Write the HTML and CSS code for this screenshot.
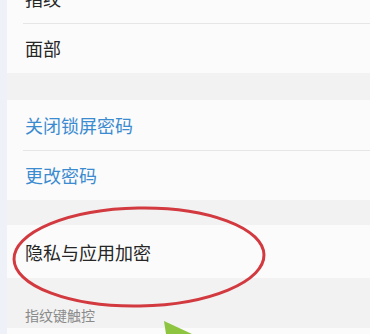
FILE: index.html
```html
<!DOCTYPE html>
<html lang="zh">
<head>
<meta charset="utf-8">
<link rel="stylesheet" href="styles.css">
</head>
<body>
<div class="page">
  <div class="col">
    <div class="card first">
      <div class="row"><span class="label">指纹</span></div>
      <div class="row"><span class="label">面部</span></div>
    </div>
    <div class="gap g1"></div>
    <div class="card">
      <div class="row"><span class="label link">关闭锁屏密码</span></div>
      <div class="row"><span class="label link">更改密码</span></div>
    </div>
    <div class="gap g2"></div>
    <div class="card">
      <div class="row tall"><span class="label">隐私与应用加密</span></div>
    </div>
    <div class="section">指纹键触控</div>
    <div class="card">
      <div class="row"></div>
    </div>
  </div>
  <svg class="overlay" width="370" height="334" viewBox="0 0 370 334">
    <ellipse cx="139" cy="257" rx="125" ry="49" fill="none" stroke="#d23a40" stroke-width="3" transform="rotate(-1 139 257)"/>
    <polygon points="164,321 192,334 166,334" fill="#8dc540"/>
  </svg>
</div>
</body>
</html>
```
FILE: styles.css
```css
html, body {
  margin: 0;
  padding: 0;
  overflow: hidden;
}
body {
  width: 370px;
  height: 334px;
  font-family: "Noto Sans CJK SC", "Noto Sans", sans-serif;
  background: #f0f2f7;
}
.page {
  position: relative;
  width: 370px;
  height: 334px;
  overflow: hidden;
  padding-left: 7px;
  box-sizing: border-box;
  background: #eef1f8;
}
.col {
  background: #f2f2f2;
  display: flex;
  flex-direction: column;
  height: 100%;
}
.col > * {
  flex-shrink: 0;
}
.card {
  background: #fbfbfb;
}
.card.first {
  margin-top: -27px;
}
.row {
  height: 50px;
  display: flex;
  align-items: center;
  padding-left: 18px;
  position: relative;
}
.row + .row::before {
  content: "";
  position: absolute;
  left: 16px;
  right: 0;
  top: 0;
  height: 1px;
  background: #e6e6e6;
}
.row.tall {
  height: 53px;
}
.label {
  font-size: 18px;
  color: #262626;
  line-height: 1;
}
.label.link {
  color: #3b8bd0;
}
.g1 { height: 27px; }
.g2 { height: 25px; }
.section {
  height: 50px;
  box-sizing: border-box;
  padding: 30px 0 0 18px;
  font-size: 14px;
  line-height: 14px;
  color: #8a8a8a;
}
.overlay {
  position: absolute;
  left: 0;
  top: 0;
}
```
